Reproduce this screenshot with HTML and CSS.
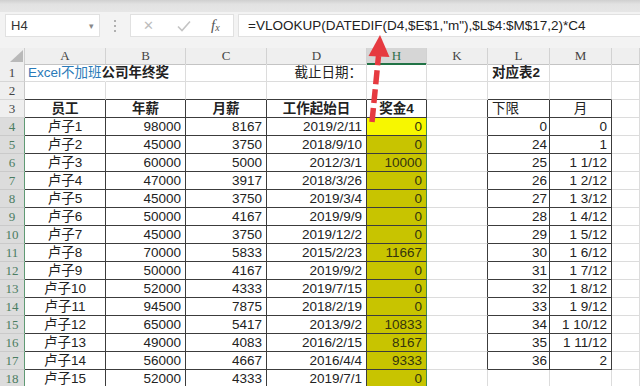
FILE: index.html
```html
<!DOCTYPE html>
<html>
<head>
<meta charset="utf-8">
<link rel="stylesheet" href="styles.css">
</head>
<body>
<div class="app">
  <div class="topband"></div>
  <div class="fbar">
    <div class="namebox"><span>H4</span><span class="dd">▾</span></div>
    <div class="dots"><i></i><i></i><i></i></div>
    <div class="btnbox">
      <span class="x">✕</span>
      <svg class="ok" width="14" height="12" viewBox="0 0 14 12"><path d="M1 6.5 L5 10.5 L13 1.5" fill="none" stroke="#c4c4c4" stroke-width="1.6"/></svg>
      <span class="fx">f<sub>x</sub></span>
    </div>
    <div class="formula">=VLOOKUP(DATEDIF(D4,$E$1,"m"),$L$4:$M$17,2)*C4</div>
  </div>

  <div class="sheet">
    <div class="row hdr">
      <div class="corner"><svg width="25" height="16" viewBox="0 0 25 16"><polygon points="10,14 23,2 23,14" fill="#b9b9b9"/></svg></div>
      <div class="ch">A</div><div class="ch">B</div><div class="ch">C</div><div class="ch">D</div><div class="ch sel">H</div><div class="ch">K</div><div class="ch">L</div><div class="ch">M</div><div class="ch"></div>
    </div>

    <div class="row">
      <div class="rh">1</div>
      <div class="c b nob title"><span class="blue">Excel不加班</span>公司年终奖</div><div class="c"></div><div class="c"></div><div class="c r">截止日期：</div><div class="c"></div><div class="c"></div><div class="c b">对应表2</div><div class="c"></div><div class="c"></div>
    </div>
    <div class="row">
      <div class="rh">2</div>
      <div class="c bb"></div><div class="c bb"></div><div class="c bb"></div><div class="c bb"></div><div class="c bb"></div><div class="c"></div><div class="c bb"></div><div class="c bb"></div><div class="c"></div>
    </div>
    <div class="row">
      <div class="rh">3</div>
      <div class="c t m b">员工</div><div class="c t m b">年薪</div><div class="c t m b">月薪</div><div class="c t m b">工作起始日</div><div class="c t m b">奖金4</div><div class="c br"></div><div class="c t">下限</div><div class="c t m">月</div><div class="c"></div>
    </div>

    <div class="row"><div class="rh sel">4</div><div class="c t m">卢子1</div><div class="c t r">98000</div><div class="c t r">8167</div><div class="c t r">2019/2/11</div><div class="c t r hy act">0</div><div class="c br"></div><div class="c t r l2">0</div><div class="c t r">0</div><div class="c"></div></div>
    <div class="row"><div class="rh sel">5</div><div class="c t m">卢子2</div><div class="c t r">45000</div><div class="c t r">3750</div><div class="c t r">2018/9/10</div><div class="c t r hy">0</div><div class="c br"></div><div class="c t r l2">24</div><div class="c t r">1</div><div class="c"></div></div>
    <div class="row"><div class="rh sel">6</div><div class="c t m">卢子3</div><div class="c t r">60000</div><div class="c t r">5000</div><div class="c t r">2012/3/1</div><div class="c t r hy">10000</div><div class="c br"></div><div class="c t r l2">25</div><div class="c t r">1 1/12</div><div class="c"></div></div>
    <div class="row"><div class="rh sel">7</div><div class="c t m">卢子4</div><div class="c t r">47000</div><div class="c t r">3917</div><div class="c t r">2018/3/26</div><div class="c t r hy">0</div><div class="c br"></div><div class="c t r l2">26</div><div class="c t r">1 2/12</div><div class="c"></div></div>
    <div class="row"><div class="rh sel">8</div><div class="c t m">卢子5</div><div class="c t r">45000</div><div class="c t r">3750</div><div class="c t r">2019/3/4</div><div class="c t r hy">0</div><div class="c br"></div><div class="c t r l2">27</div><div class="c t r">1 3/12</div><div class="c"></div></div>
    <div class="row"><div class="rh sel">9</div><div class="c t m">卢子6</div><div class="c t r">50000</div><div class="c t r">4167</div><div class="c t r">2019/9/9</div><div class="c t r hy">0</div><div class="c br"></div><div class="c t r l2">28</div><div class="c t r">1 4/12</div><div class="c"></div></div>
    <div class="row"><div class="rh sel">10</div><div class="c t m">卢子7</div><div class="c t r">45000</div><div class="c t r">3750</div><div class="c t r">2019/12/2</div><div class="c t r hy">0</div><div class="c br"></div><div class="c t r l2">29</div><div class="c t r">1 5/12</div><div class="c"></div></div>
    <div class="row"><div class="rh sel">11</div><div class="c t m">卢子8</div><div class="c t r">70000</div><div class="c t r">5833</div><div class="c t r">2015/2/23</div><div class="c t r hy">11667</div><div class="c br"></div><div class="c t r l2">30</div><div class="c t r">1 6/12</div><div class="c"></div></div>
    <div class="row"><div class="rh sel">12</div><div class="c t m">卢子9</div><div class="c t r">50000</div><div class="c t r">4167</div><div class="c t r">2019/9/2</div><div class="c t r hy">0</div><div class="c br"></div><div class="c t r l2">31</div><div class="c t r">1 7/12</div><div class="c"></div></div>
    <div class="row"><div class="rh sel">13</div><div class="c t m">卢子10</div><div class="c t r">52000</div><div class="c t r">4333</div><div class="c t r">2019/7/15</div><div class="c t r hy">0</div><div class="c br"></div><div class="c t r l2">32</div><div class="c t r">1 8/12</div><div class="c"></div></div>
    <div class="row"><div class="rh sel">14</div><div class="c t m">卢子11</div><div class="c t r">94500</div><div class="c t r">7875</div><div class="c t r">2018/2/19</div><div class="c t r hy">0</div><div class="c br"></div><div class="c t r l2">33</div><div class="c t r">1 9/12</div><div class="c"></div></div>
    <div class="row"><div class="rh sel">15</div><div class="c t m">卢子12</div><div class="c t r">65000</div><div class="c t r">5417</div><div class="c t r">2013/9/2</div><div class="c t r hy">10833</div><div class="c br"></div><div class="c t r l2">34</div><div class="c t r">1 10/12</div><div class="c"></div></div>
    <div class="row"><div class="rh sel">16</div><div class="c t m">卢子13</div><div class="c t r">49000</div><div class="c t r">4083</div><div class="c t r">2016/2/15</div><div class="c t r hy">8167</div><div class="c br"></div><div class="c t r l2">35</div><div class="c t r">1 11/12</div><div class="c"></div></div>
    <div class="row"><div class="rh sel">17</div><div class="c t m">卢子14</div><div class="c t r">56000</div><div class="c t r">4667</div><div class="c t r">2016/4/4</div><div class="c t r hy">9333</div><div class="c br"></div><div class="c t r l2">36</div><div class="c t r">2</div><div class="c"></div></div>
    <div class="row"><div class="rh sel">18</div><div class="c t m">卢子15</div><div class="c t r">52000</div><div class="c t r">4333</div><div class="c t r">2019/7/1</div><div class="c t r hy">0</div><div class="c"></div><div class="c"></div><div class="c"></div><div class="c"></div></div>
  </div>

  <svg class="arrow" width="640" height="386" viewBox="0 0 640 386">
    <line x1="372" y1="122" x2="378.5" y2="56" stroke="#e63a40" stroke-width="5.5" stroke-dasharray="14 5"/>
    <polygon points="380,35 368.5,56 389.5,57" fill="#e63a40"/>
  </svg>
</div>
</body>
</html>
```

FILE: styles.css
```css
html, body {
  margin: 0;
  padding: 0;
  background: #ffffff;
}
body {
  width: 640px;
  height: 386px;
  overflow: hidden;
  font-family: "Liberation Sans", "Noto Sans CJK SC", sans-serif;
  color: #222;
}
.app {
  position: relative;
  width: 640px;
  height: 386px;
  overflow: hidden;
}
.topband {
  height: 12px;
  background: linear-gradient(#cfcfcf, #e2e2e2 35%, #e6e6e6);
}
.fbar {
  height: 36px;
  box-sizing: border-box;
  padding-top: 2px;
  background: #f3f3f3;
  display: flex;
  align-items: flex-start;
}
.namebox, .btnbox, .formula {
  height: 23px;
  box-sizing: border-box;
  background: #fff;
  border: 1px solid #e1e1e1;
}
.namebox {
  margin-left: 5px;
  width: 95px;
  display: flex;
  align-items: center;
  justify-content: space-between;
  padding: 0 5px 0 5px;
  font-size: 13px;
  color: #333;
}
.namebox .dd {
  font-size: 9px;
  color: #888;
}
.dots {
  width: 30px;
  height: 23px;
  display: flex;
  flex-direction: column;
  align-items: center;
  justify-content: center;
  gap: 3px;
}
.dots i {
  display: block;
  width: 2px;
  height: 2px;
  background: #b0b0b0;
}
.btnbox {
  width: 104px;
  display: flex;
  align-items: center;
  padding-left: 12px;
}
.btnbox .x {
  font-size: 13px;
  color: #bdbdbd;
  width: 34px;
}
.btnbox .ok {
  margin-right: 20px;
}
.btnbox .fx {
  font-family: "Liberation Serif", serif;
  font-style: italic;
  font-size: 15px;
  color: #555;
}
.btnbox .fx sub {
  font-size: 10px;
  vertical-align: -1px;
}
.formula {
  margin-left: 4px;
  flex: 1;
  border-right: none;
  padding-left: 9px;
  font-size: 13.5px;
  line-height: 21px;
  color: #222;
  white-space: nowrap;
}

.sheet {
  width: 640px;
}
.row {
  display: grid;
  grid-template-columns: 25px 81px 80px 81px 100px 60px 61px 62px 62px 1fr;
  height: 18px;
  background: #fff;
}
.row.hdr {
  height: 16px;
  background: #efefef;
}
.corner {
  box-sizing: border-box;
  border-right: 1px solid #cfcfcf;
  border-bottom: 1px solid #c4c4c4;
  line-height: 0;
}
.ch {
  box-sizing: border-box;
  border-right: 1px solid #d2d2d2;
  border-bottom: 1px solid #c4c4c4;
  font-family: "Liberation Serif", "DejaVu Serif", serif;
  font-size: 13px;
  line-height: 15px;
  text-align: center;
  color: #444;
}
.ch.sel {
  background: #d6d6d6;
  border-bottom: 2px solid #217346;
  color: #2f6e4a;
}
.rh {
  box-sizing: border-box;
  background: #efefef;
  border-right: 1px solid #c8c8c8;
  border-bottom: 1px solid #d6d6d6;
  font-family: "Liberation Serif", "DejaVu Serif", serif;
  font-size: 13px;
  line-height: 17px;
  text-align: center;
  color: #444;
}
.rh.sel {
  background: #dcdcdc;
  color: #4b7d62;
  border-right: 1px solid #5f9a74;
  border-bottom-color: #cacaca;
}
.c {
  box-sizing: border-box;
  border-right: 1px solid #dcdcdc;
  border-bottom: 1px solid #dcdcdc;
  padding: 0 4px;
  font-size: 13.5px;
  line-height: 17px;
  white-space: nowrap;
  overflow: visible;
  background: transparent;
}
.c.nob {
  border-right-color: transparent;
}
.c.r { text-align: right; }
.c.m { text-align: center; }
.c.b { font-weight: bold; }
.c.l2 { padding-right: 2px; }
.c.t {
  border-right-color: #3c3c3c;
  border-bottom-color: #3c3c3c;
}
.c.bb { border-bottom-color: #3c3c3c; }
.c.br { border-right-color: #3c3c3c; }
.title {
  position: relative;
  z-index: 1;
  padding-left: 3px;
}
.blue {
  color: #2a7ab8;
  font-weight: normal;
}
.c.hy {
  background: #c8c400;
  color: #34340e;
  border-right-color: #3f8a4f;
  font-weight: normal;
}
.c.hy.act {
  background: #f7f700;
}
.arrow {
  position: absolute;
  left: 0;
  top: 0;
  pointer-events: none;
}
```
